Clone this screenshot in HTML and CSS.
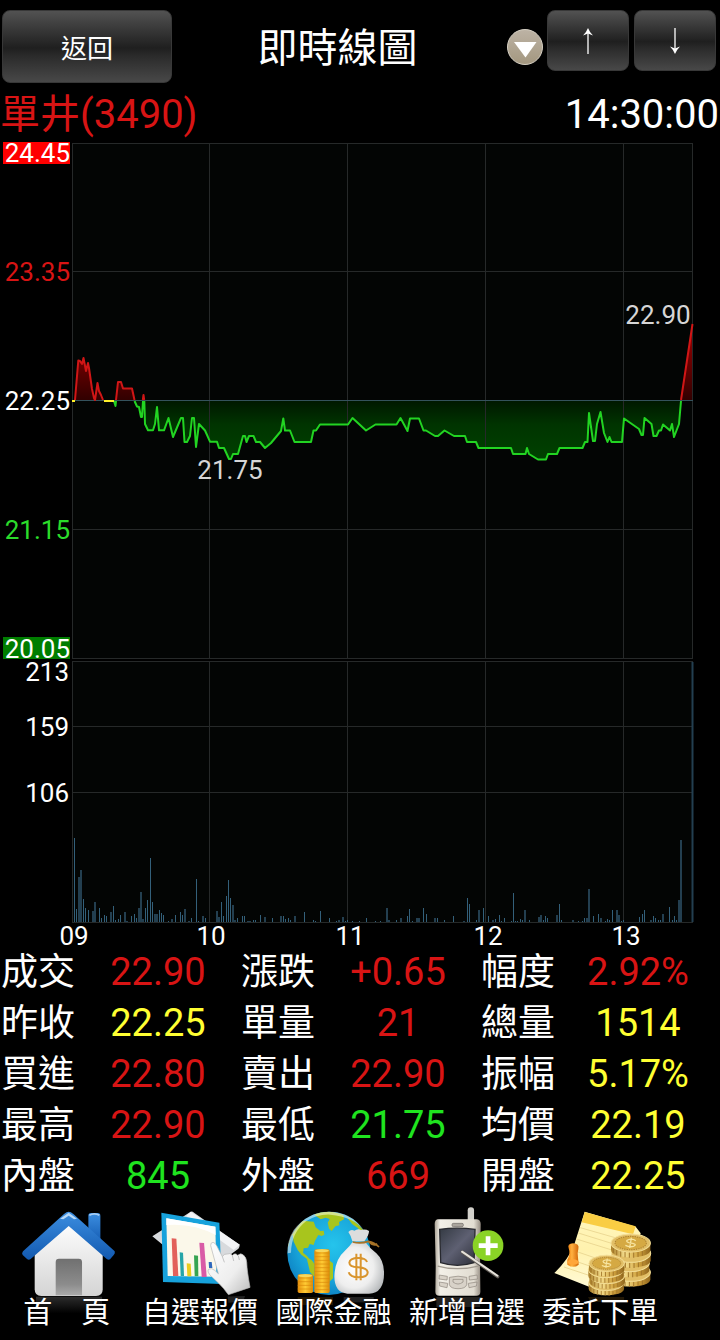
FILE: index.html
```html
<!DOCTYPE html>
<html lang="zh-Hant">
<head>
<meta charset="utf-8">
<meta name="viewport" content="width=device-width, initial-scale=1">
<title>即時線圖</title>
<link rel="stylesheet" href="styles.css">
</head>
<body>
<header class="topbar">
  <button class="btn btn-back" type="button">返回</button>
  <h1 class="title">即時線圖</h1>
  <button class="picker" type="button" aria-label="選單">
    <svg viewBox="0 0 36 36" aria-hidden="true">
      <defs><linearGradient id="beige" x2="0" y2="1"><stop stop-color="#bdb3a5"/><stop offset="1" stop-color="#a3977f"/></linearGradient></defs>
      <circle cx="18" cy="18" r="17.5" fill="url(#beige)" stroke="#d6d0c4"/>
      <path d="M7 13H29.5L18.5 28.5Z" fill="#fff"/>
    </svg>
  </button>
  <div class="steps">
    <button class="btn btn-step" type="button" aria-label="上一檔">
      <svg viewBox="0 0 12 26" aria-hidden="true"><path d="M6 26V3" stroke="#fff" stroke-width="1.3"/><path d="M6 0Q7.5 4 11 7.5L6 5.5L1 7.5Q4.500 4 6 0Z" fill="#fff"/></svg>
    </button>
    <button class="btn btn-step" type="button" aria-label="下一檔">
      <svg viewBox="0 0 12 26" aria-hidden="true"><path d="M6 0V23" stroke="#fff" stroke-width="1.3"/><path d="M6 26Q7.500 22 11 18.500L6 20.500L1 18.500Q4.500 22 6 26Z" fill="#fff"/></svg>
    </button>
  </div>
</header>

<main>
  <div class="quote">
    <span class="up">單井(3490)</span>
    <time>14:30:00</time>
  </div>

  <svg class="chart" viewBox="0 140 720 807" role="img" aria-label="即時走勢與成交量">
    <defs>
      <linearGradient id="fall" gradientUnits="userSpaceOnUse" x1="0" y1="401" x2="0" y2="460"><stop stop-color="#001800"/><stop offset=".4" stop-color="#003400"/><stop offset="1" stop-color="#004200"/></linearGradient>
      <linearGradient id="rise" gradientUnits="userSpaceOnUse" x1="0" y1="340" x2="0" y2="401"><stop stop-color="#8c0000"/><stop offset="1" stop-color="#300000"/></linearGradient>
    </defs>
    <rect x="72" y="143" width="621" height="516" fill="#030504"/>
    <rect x="72" y="661" width="621" height="262" fill="#030504"/>

    <g stroke="none">
      <path fill="url(#rise)" d="M75 401L78.300 360.500L80 361L82 364L83.500 358L86 371L88 363L89 368L92 389L94 398L95 400L97.500 383L99 391L101 395L103 401ZM116 401L118 382L121 382L123 388.500H132L134.500 401ZM142.500 401L143.500 395L144.500 401ZM681 401L692.500 324V401Z"/>
      <path fill="url(#fall)" d="M134.500 401L137 406.500L139 407L141 417H142L143 401H144.300L145 424L148 430.300H153L155 424L157 407L159 430.300H164L168.500 418L173 437L181 418H183L184.500 442H187L190 436L192 418H194L196 447L199 424L205 430.500L210 441.700H217L219 448H224L229 459H231L233 454H238L243 436H245L246.500 442L249 436H253.500L256 442H260L265 448L271 443L281 431L283.300 418.500L285 430.500H290L294.500 442H311L313.500 430.500H316L320 424.500H348L352.500 418L366 430.500L375.500 424.500H396.500L400.500 418L407.500 431L410 418.500H419L423.500 430.500H426L435 436H438L444.500 430.500L454 436H465L467 442H476L478.500 448H511L513 454H525.500L527 448L529 454L538 459.500H546L548 454H557L559.500 448H582.500L585 442H587.500L589 413L593 441H595L597 424L600.500 412L604 433L607.500 442L609.500 437L611.500 442H622L624 418.500L639 429L641.500 435H643L644.500 418L651.500 424L653.500 436H656.500L659 430.500H661L663 424.500L670 430.500L672 424L674 437L679 424L681 401Z"/>
    </g>

    <path class="grid" d="M72 143.500H693M72 271.500H693M72 529.500H693M72 658.500H693M72 661.500H693M72 726.500H693M72 792.500H693M72 922.500H693M72.500 143V659M209.500 143V659M347.500 143V659M485.500 143V659M623.500 143V659M692.500 143V659M72.500 661V923M209.500 661V923M347.500 661V923M485.500 661V923M623.500 661V923M692.500 661V923"/>
    <path d="M72 400.500H693" stroke="#34525c" fill="none"/>

    <g class="line">
      <path stroke="#d01616" d="M75 400L78.300 360.500L80 361L82 364L83.500 358L86 371L88 363L89 368L92 389L94 398L95 400L97.500 383L99 391L101 395L103 400M116 400L118 382L121 382L123 388.500H132L134.500 400M142.800 400L143.500 395L144.200 400M681 400L692.500 324"/>
      <path stroke="#22d422" d="M114 401L115.500 406L116 401M134.500 401L137 406.500L139 407L141 417H142L143 401M144.300 401L145 424L148 430.300H153L155 424L157 407L159 430.300H164L168.500 418L173 437L181 418H183L184.500 442H187L190 436L192 418H194L196 447L199 424L205 430.500L210 441.700H217L219 448H224L229 459H231L233 454H238L243 436H245L246.500 442L249 436H253.500L256 442H260L265 448L271 443L281 431L283.300 418.500L285 430.500H290L294.500 442H311L313.500 430.500H316L320 424.500H348L352.500 418L366 430.500L375.500 424.500H396.500L400.500 418L407.500 431L410 418.500H419L423.500 430.500H426L435 436H438L444.500 430.500L454 436H465L467 442H476L478.500 448H511L513 454H525.500L527 448L529 454L538 459.500H546L548 454H557L559.500 448H582.500L585 442H587.500L589 413L593 441H595L597 424L600.500 412L604 433L607.500 442L609.500 437L611.500 442H622L624 418.500L639 429L641.500 435H643L644.500 418L651.500 424L653.500 436H656.500L659 430.500H661L663 424.500L670 430.500L672 424L674 437L679 424L681 401"/>
      <path stroke="#fff02a" stroke-width="2" d="M72 401H75M104 401H114"/>
    </g>

    <g fill="none" transform="translate(.5 0)">
      <path stroke="#33607a" d="M74 922v-84M76 922v-13M83 922v-23M85 922v-14M88 922v-12M99 922v-14M101 922v-4M104 922v-7M106 922v-6M113 922v-16M115 922v-2M118 922v-3M120 922v-7M131 922v-6M134 922v-8M136 922v-4M145 922v-14M147 922v-22M150 922v-64M152 922v-20M159 922v-12M161 922v-9M163 922v-7M168 922v-1M175 922v-7M180 922v-10M182 922v-7M191 922v-4M196 922v-43M198 922v-1M205 922v-4M221 922v-20M223 922v-6M226 922v-26M228 922v-42M230 922v-24M237 922v-4M242 922v-6M244 922v-6M253 922v-2M255 922v-2M260 922v-7M272 922v-4M283 922v-6M285 922v-3M288 922v-4M290 922v-2M304 922v-10M313 922v-2M315 922v-1M320 922v-11M329 922v-4M336 922v-1M345 922v-1M347 922v-2M352 922v-1M359 922v-1M366 922v-4M375 922v-1M380 922v-1M396 922v-2M407 922v-6M409 922v-13M412 922v-1M423 922v-14M426 922v-8M437 922v-4M444 922v-2M453 922v-6M467 922v-24M469 922v-18M476 922v-2M483 922v-14M488 922v-6M495 922v-3M499 922v-7M501 922v-1M504 922v-4M511 922v-1M513 922v-29M515 922v-1M517 922v-1M520 922v-3M522 922v-2M529 922v-2M543 922v-2M545 922v-6M547 922v-4M559 922v-18M561 922v-2M578 922v-1M582 922v-1M584 922v-4M593 922v-6M598 922v-8M605 922v-1M607 922v-3M609 922v-2M612 922v-12M621 922v-1M623 922v-2M639 922v-5M642 922v-8M644 922v-12M653 922v-6M655 922v-4M658 922v-2M660 922v-2M669 922v-15M672 922v-2M674 922v-6M676 922v-2"/>
      <path stroke="#233f50" stroke-width="2" d="M78.500 922v-45M80.500 922v-52M92.500 922v-11M94.500 922v-20M110.500 922v-10M124.500 922v-10M126.500 922v-1M138.500 922v-14M140.500 922v-30M142.500 922v-3M154.500 922v-8M156.500 922v-8M171.500 922v-3M184.500 922v-13M188.500 922v-1M202.500 922v-6M216.500 922v-11M218.500 922v-5M232.500 922v-17M234.500 922v-2M247.500 922v-1M249.500 922v-1M264.500 922v-5M280.500 922v-6M294.500 922v-6M338.500 922v-2M342.500 922v-5M386.500 922v-14M388.500 922v-2M400.500 922v-4M416.500 922v-4M418.500 922v-4M434.500 922v-4M463.500 922v-1M478.500 922v-12M492.500 922v-2M524.500 922v-12M538.500 922v-5M540.500 922v-7M556.500 922v-7M572.500 922v-2M586.500 922v-4M588.500 922v-33M600.500 922v-4M616.500 922v-12M618.500 922v-7M650.500 922v-2M662.500 922v-8M678.500 922v-22M680.500 922v-82M692 922v-260"/>
    </g>

    <rect x="3" y="142" width="67" height="22" fill="#f00"/>
    <rect x="3" y="637" width="67" height="22" fill="#007d00"/>
    <g class="axis" text-anchor="end">
      <text x="70" y="162">24.45</text>
      <text x="70" y="281" class="c-up">23.35</text>
      <text x="70" y="410">22.25</text>
      <text x="70" y="539" class="c-down">21.15</text>
      <text x="70" y="658">20.05</text>
      <text x="69" y="681">213</text>
      <text x="69" y="736">159</text>
      <text x="69" y="802">106</text>
    </g>
    <g class="axis" text-anchor="middle">
      <text x="74" y="945">09</text>
      <text x="211" y="945">10</text>
      <text x="350" y="945">11</text>
      <text x="488" y="945">12</text>
      <text x="626" y="945">13</text>
      <text x="230" y="479" class="mark">21.75</text>
      <text x="658" y="324" class="mark">22.90</text>
    </g>
  </svg>

  <table class="stats">
    <tr><th scope="row">成交</th><td class="up">22.90</td><th scope="row">漲跌</th><td class="up">+0.65</td><th scope="row">幅度</th><td class="up">2.92%</td></tr>
    <tr><th scope="row">昨收</th><td class="flat">22.25</td><th scope="row">單量</th><td class="up">21</td><th scope="row">總量</th><td class="flat">1514</td></tr>
    <tr><th scope="row">買進</th><td class="up">22.80</td><th scope="row">賣出</th><td class="up">22.90</td><th scope="row">振幅</th><td class="flat">5.17%</td></tr>
    <tr><th scope="row">最高</th><td class="up">22.90</td><th scope="row">最低</th><td class="down">21.75</td><th scope="row">均價</th><td class="flat">22.19</td></tr>
    <tr><th scope="row">內盤</th><td class="down">845</td><th scope="row">外盤</th><td class="up">669</td><th scope="row">開盤</th><td class="flat">22.25</td></tr>
  </table>
</main>

<nav class="tabs">
  <a class="tab" href="#home">
    <svg viewBox="0 6 400 288" aria-hidden="true">
      <defs>
        <linearGradient id="wall" x2="0" y2="1"><stop stop-color="#fff"/><stop offset="1" stop-color="#d4d4d4"/></linearGradient>
        <linearGradient id="door" x2="0" y2="1"><stop stop-color="#707070"/><stop offset=".7" stop-color="#8c8c8c"/><stop offset="1" stop-color="#aaa"/></linearGradient>
        <linearGradient id="roof" x2="0" y2="1"><stop stop-color="#3c8ee0"/><stop offset="1" stop-color="#1259b0"/></linearGradient>
        <linearGradient id="mirror" x2="0" y2="1"><stop stop-color="#2c2c2c"/><stop offset="1" stop-color="#000"/></linearGradient>
      </defs>
      <rect x="108" y="290" width="198" height="50" fill="url(#mirror)"/>
      <rect x="265" y="39" width="36" height="92" rx="8" fill="url(#roof)"/>
      <path d="M268 46Q283 37 298 46" stroke="#a8cef5" stroke-width="5" fill="none"/>
      <path d="M104 150L206 62L308 150V268Q308 288 288 288H124Q104 288 104 268Z" fill="url(#wall)"/>
      <path d="M167 286V186Q167 176 177 176H236Q246 176 246 186V286Z" fill="url(#door)"/>
      <path d="M206 35Q212 35 220 42L344 154Q346 160 341 165L330 178Q325 181 320 177L206 78L92 177Q86 181 81 177L68 165Q64 160 69 154L192 42Q200 35 206 35Z" fill="url(#roof)"/>
      <path d="M180 56L206 38L231 56L222 58L206 47L190 58Z" fill="#b7d8f7"/>
    </svg>
    <span>首　頁</span>
  </a>
  <a class="tab" href="#watchlist">
    <svg viewBox="400 6 400 288" aria-hidden="true">
      <defs><linearGradient id="hand" x2="1" y2="1"><stop stop-color="#fff"/><stop offset=".6" stop-color="#eee"/><stop offset="1" stop-color="#bbb"/></linearGradient></defs>
      <path d="M458 109L573 35Q578 33 583 38L720 134Q720 141 716 146L670 180L520 160Z" fill="#d8dadd"/>
      <path d="M573 35L720 134L702 150L560 48Z" fill="#f3f4f6"/>
      <path d="M485 38L659 68L666 252L490 246Z" fill="#17a2dc"/>
      <path d="M500 55L647 80L650 230L504 228Z" fill="#fbf8ea"/>
      <path d="M500 55L647 80L648 105Q580 68 500 75Z" fill="#fff"/>
      <path d="M516 115L530 116L536 228H520Z" fill="#e2615b"/>
      <path d="M540 157L550 158L553 228H543Z" fill="#26a5a8"/>
      <path d="M561 190L573 191L575 229H563Z" fill="#e9cd1f"/>
      <path d="M583 166L595 167L596 229H585Z" fill="#36a451"/>
      <path d="M599 128L613 129L621 231H606Z" fill="#d95ba6"/>
      <path d="M627 186H636L638 204H628Z" fill="#2f68bd"/>
      <path d="M633 137Q632 127 640 127Q647 128 652 139L668 170Q673 160 683 162Q691 157 698 166Q706 157 714 166Q722 158 730 164Q740 171 741 187Q742 215 751 262L686 284Q672 264 657 250L630 224Q621 211 628 207Q636 203 645 211L656 221L650 200Z" fill="url(#hand)" stroke="#b5b5b5" stroke-width="2"/>
      <path d="M668 170L674 187M698 167L702 183M716 168L719 180" stroke="#aaa" stroke-width="2" fill="none"/>
      <path d="M684 289L736 288L730 304L686 308Z" fill="#222"/>
    </svg>
    <span>自選報價</span>
  </a>
  <a class="tab" href="#global">
    <svg viewBox="20 6 400 288" aria-hidden="true">
      <defs>
        <radialGradient id="sea" cx=".55" cy=".4" r=".62"><stop stop-color="#25c4ec"/><stop offset=".7" stop-color="#17a2d8"/><stop offset="1" stop-color="#0e83c4"/></radialGradient>
        <radialGradient id="bag" cx=".4" cy=".5" r=".65"><stop stop-color="#fff"/><stop offset=".6" stop-color="#eee"/><stop offset="1" stop-color="#b6b9bb"/></radialGradient>
        <linearGradient id="gold"><stop stop-color="#e58e0b"/><stop offset=".5" stop-color="#ffcc35"/><stop offset="1" stop-color="#dc8a08"/></linearGradient>
        <clipPath id="globe"><circle cx="206" cy="160" r="125"/></clipPath>
      </defs>
      <rect x="112" y="291" width="106" height="24" fill="#211502"/><rect x="250" y="291" width="90" height="16" fill="#222"/>
      <circle cx="206" cy="160" r="125" fill="url(#sea)"/>
      <g clip-path="url(#globe)" fill="#a8c51d">
        <path d="M75 165Q85 105 127 62L160 65L166 82L180 93L190 92L192 104L184 108L174 105L164 122L160 135L148 132L143 143L130 145L128 158L140 168L148 178L139 176L123 164L112 150L100 125L96 100Z"/>
        <path d="M156 36Q210 28 249 45L251 58L236 66L237 76L225 79L214 93L206 86L202 68L208 57L196 53L181 58L168 49Z"/>
        <path d="M260 52Q300 72 318 105L305 99L292 84L275 72Z"/>
        <path d="M139 174Q155 176 162 192V230L149 216Z"/>
        <path d="M205 180L218 190V235L207 245Z"/>
      </g>
      <path d="M92 158Q93 98 137 64Q171 42 210 44Q280 50 311 91Q272 34 206 35Q142 35 100 90Q79 123 82 160Z" fill="#fff" opacity=".5"/>
      <g fill="url(#gold)"><rect x="162" y="148" width="46" height="131" rx="5"/><rect x="112" y="223" width="46" height="56" rx="5"/></g>
      <path d="M162 159h46M162 170h46M162 181h46M162 192h46M162 203h46M162 214h46M162 225h46M162 236h46M162 247h46M162 258h46M162 269h46M112 234h46M112 245h46M112 256h46M112 267h46" stroke="#d98a0a" stroke-width="2"/>
      <ellipse cx="185" cy="152" rx="21" ry="4" fill="#f9d75b"/><ellipse cx="135" cy="227" rx="21" ry="4" fill="#f9d75b"/>
      <path d="M276 124Q272 107 264 96Q272 86 282 92Q293 84 302 90Q315 86 326 93Q326 105 312 124Z" fill="#dcdddd"/>
      <path d="M277 125H314Q326 142 348 160Q371 181 371 220Q371 280 326 281H261Q222 278 222 229Q224 178 253 153Q268 139 277 125Z" fill="url(#bag)"/>
      <path d="M277 126Q302 132 324 124Q342 127 356 141M324 125Q340 140 350 131" stroke="#a77327" stroke-width="5" fill="none"/>
      <path d="M320 186Q316 174 294 174Q268 174 267 188Q267 200 293 202Q322 204 322 218Q321 232 295 232Q269 232 265 217M288 161V241M301 161V241" stroke="#d9952e" stroke-width="6" fill="none"/>
    </svg>
    <span>國際金融</span>
  </a>
  <a class="tab" href="#add">
    <svg viewBox="420 6 400 288" aria-hidden="true">
      <defs>
        <linearGradient id="body"><stop stop-color="#aaa295"/><stop offset=".12" stop-color="#f3f0e8"/><stop offset=".85" stop-color="#e2ddd2"/><stop offset="1" stop-color="#958c82"/></linearGradient>
        <linearGradient id="screen" x2="1" y2="1"><stop stop-color="#343a43"/><stop offset=".5" stop-color="#5e6072"/><stop offset="1" stop-color="#2c2e38"/></linearGradient>
      </defs>
      <rect x="529" y="291" width="131" height="30" fill="#242220"/>
      <rect x="623" y="22" width="19" height="60" rx="9" fill="#d2d0cb"/>
      <path d="M533 58H651Q662 60 662 72L660 198L661 275Q661 287 649 287H538Q526 287 526 275L527 198L524 72Q524 60 533 58Z" fill="url(#body)"/>
      <path d="M539 88Q590 81 645 88L642 188Q592 204 542 188Z" fill="url(#screen)" stroke="#28292f" stroke-width="4"/>
      <path d="M533 198Q590 214 655 198" stroke="#a29b91" stroke-width="4" fill="none"/>
      <rect x="576" y="70" width="34" height="10" rx="4" fill="#aaa59d" stroke="#706b66" stroke-width="2"/>
      <g fill="#d8d2c8" stroke="#8c857c" stroke-width="2"><path d="M538 225L562 229L561 240L537 237ZM651 225L627 229L628 240L652 237ZM538 246L563 250L561 263L539 258ZM651 246L625 250L627 263L649 258Z"/><path d="M568 232Q594 225 620 232V254Q616 266 594 266Q572 266 568 254Z"/><path d="M579 238H609V246Q594 258 579 246Z"/></g>
      <path d="M607 156L713 230" stroke="#5f5a55" stroke-width="10" stroke-linecap="round"/>
      <path d="M606 155L712 227" stroke="#e6e2da" stroke-width="6" stroke-linecap="round"/>
      <circle cx="684" cy="137" r="46" fill="#8ad326"/>
      <path d="M684 109V166M656 137H713" stroke="#fff" stroke-width="14"/>
    </svg>
    <span>新增自選</span>
  </a>
  <a class="tab" href="#order">
    <svg viewBox="250 6 400 288" aria-hidden="true">
      <defs>
        <linearGradient id="paper" x2="0" y2="1"><stop stop-color="#fff6bd"/><stop offset=".5" stop-color="#fff2ae"/><stop offset="1" stop-color="#fffad7"/></linearGradient>
        <linearGradient id="edge"><stop stop-color="#a77c26"/><stop offset=".35" stop-color="#f6df8e"/><stop offset=".7" stop-color="#cfa13d"/><stop offset="1" stop-color="#8f651b"/></linearGradient>
        <linearGradient id="pawn"><stop stop-color="#ed7b08"/><stop offset=".4" stop-color="#ffb140"/><stop offset="1" stop-color="#d26507"/></linearGradient>
        <g id="coin"><path d="M0 0V21C0 50 118 50 118 21V0Z" fill="url(#edge)"/><path d="M7 15V30M17 21V37M29 25V41M42 27V43M55 28V44M68 28V44M81 26V42M94 23V38M107 18V33" stroke="#a1752a" stroke-width="3"/><ellipse cx="59" cy="0" rx="59" ry="27" fill="#e2bf67" stroke="#f4df98" stroke-width="3"/></g>
        <g id="face"><ellipse cx="59" cy="0" rx="47" ry="20" fill="#d5a943" stroke="#ac8030" stroke-width="3" stroke-dasharray="4 3"/><path d="M74-7Q67-13 55-11Q43-8 49-3Q54 1 65 1Q78 4 69 9Q57 14 43 7M61-16L56 15" stroke="#f7e4a0" stroke-width="4" fill="none"/></g>
      </defs>
      <path d="M412 291H520V306H420Z" fill="#211706"/>
      <path d="M402 35L555 80L570 100L540 200L430 266L311 219Q352 180 370 136Z" fill="url(#paper)"/>
      <path d="M402 36L555 79L547 103L393 67Z" fill="#f9cd43"/>
      <path d="M389 83L528 123M383 99L505 137M377 117L487 151M367 151L446 178M355 177L420 199M340 201L415 226" stroke="#e3cb85" stroke-width="2"/>
      <path d="M354 145Q349 131 367 130Q387 131 383 147Q379 159 382 174L384 194Q369 207 350 194V179Q360 161 354 145Z" fill="url(#pawn)"/>
      <ellipse cx="367" cy="186" rx="17" ry="8" fill="#ffa63a"/>
      <use href="#coin" x="481" y="217"/><use href="#coin" x="478" y="188"/><use href="#coin" x="482" y="160"/><use href="#coin" x="481" y="129"/><use href="#face" x="481" y="129"/>
      <g transform="translate(413 0) scale(.9)"><use href="#coin" x="1" y="275"/><use href="#coin" x="4" y="252"/><use href="#coin" x="0" y="232"/><use href="#coin" x="2" y="211"/><use href="#face" x="2" y="211"/></g>
    </svg>
    <span>委託下單</span>
  </a>
</nav>
</body>
</html>
```

FILE: styles.css
```css
* { box-sizing: border-box; }
body {
  margin: 0;
  background: #000;
  color: #fff;
  font-family: Roboto, "Noto Sans CJK TC", sans-serif;
}
button { font: inherit; color: inherit; padding: 0; cursor: pointer; }

.topbar {
  display: flex;
  align-items: center;
  height: 90px;
  padding: 10px 4px 7px 2px;
}
.btn {
  display: grid;
  place-items: center;
  border: 1px solid #383838;
  border-radius: 8px;
  background: linear-gradient(#525252, #3c3c3c 22%, #1f1f1f 52%, #2c2c2c 65%, #484848);
}
.btn-back { width: 170px; height: 73px; font-size: 26px; }
.title {
  flex: 1;
  margin: 0;
  padding: 4px 4px 0 0;
  text-align: center;
  font-size: 40px;
  line-height: 50px;
  font-weight: 400;
}
.picker { width: 36px; height: 36px; border: 0; background: none; }
.picker svg { display: block; width: 36px; height: 36px; }
.steps { display: flex; gap: 5px; align-self: flex-start; margin-left: 4px; }
.btn-step { width: 82px; height: 61px; }
.btn-step svg { width: 12px; height: 26px; }

.quote {
  display: flex;
  justify-content: space-between;
  height: 50px;
  padding-right: 1px;
  font-size: 40px;
  line-height: 50px;
}

.chart { display: block; width: 100%; height: auto; overflow: visible; }
.grid { stroke: #262929; fill: none; }
.line { fill: none; stroke-width: 2; stroke-linejoin: round; }
.axis { font-size: 26px; fill: #fff; }
.axis .mark { fill: #d6d6d6; }
.axis .c-up { fill: #d81414; }
.axis .c-down { fill: #2bdc2b; }

.stats {
  width: 100%;
  border-collapse: collapse;
  table-layout: fixed;
  font-size: 38px;
  line-height: 51px;
}
.stats th, .stats td { height: 51px; padding: 0; font-weight: 400; white-space: nowrap; }
.stats th { width: 76px; padding-left: 1px; text-align: left; font-size: 37px; }
.stats td { text-align: center; }
.up { color: #d81414; }
.down { color: #1fe41f; }
.flat { color: #ffff32; }

.tabs {
  display: grid;
  grid-template-columns: repeat(5, 1fr);
  padding-right: 53px;
}
.tab { color: #fff; text-decoration: none; text-align: center; }
.tab svg { display: block; width: 100%; height: auto; overflow: visible; }
.tab span {
  display: block;
  position: relative;
  font-size: 29px;
  line-height: 30px;
  white-space: nowrap;
}
```
